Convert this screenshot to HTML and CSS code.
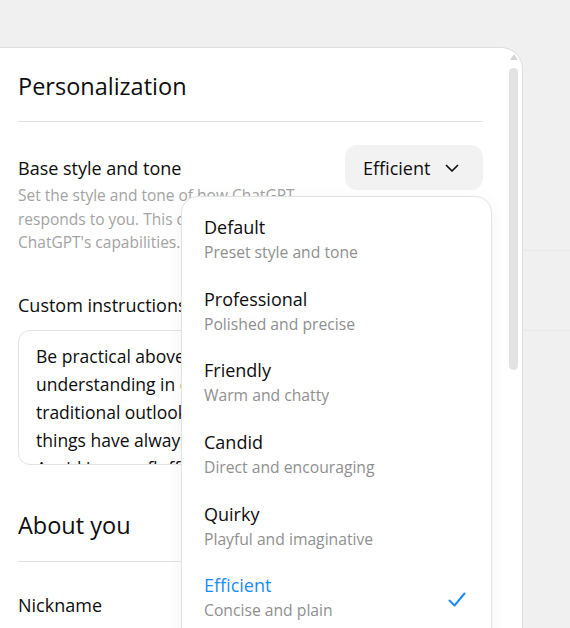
FILE: index.html
```html
<!DOCTYPE html>
<html lang="en">
<head>
<meta charset="utf-8">
<title>Personalization</title>
<link rel="stylesheet" href="styles.css">
</head>
<body>
<div class="page">
  <div class="panel">
    <div class="content">
      <h1 class="title">Personalization</h1>
      <div class="divider"></div>
      <div class="row">
        <div class="label">Base style and tone</div>
        <button class="select">Efficient
          <svg class="chev" width="16" height="16" viewBox="0 0 16 16"><path d="M2.5 5.5 L8 11 L13.5 5.5" fill="none" stroke="#0d0d0d" stroke-width="1.7" stroke-linecap="round" stroke-linejoin="round"/></svg>
        </button>
      </div>
      <p class="desc">Set the style and tone of how ChatGPT responds to you. This doesn't impact ChatGPT's capabilities.</p>
      <div class="label ci">Custom instructions</div>
      <div class="textarea">
        <div class="ta-text">Be practical above all else and keep things simple.<br>understanding in every answer matters more than flair.<br>traditional outlook is welcome; respect how<br>things have always been done and explain trade-offs.<br>Avoid jargon, fluff and needless disclaimers.</div>
      </div>
      <h2 class="title about">About you</h2>
      <div class="divider"></div>
      <div class="label nick">Nickname</div>

      <div class="menu">
        <div class="item"><div class="it">Default</div><div class="is">Preset style and tone</div></div>
        <div class="item"><div class="it">Professional</div><div class="is">Polished and precise</div></div>
        <div class="item"><div class="it">Friendly</div><div class="is">Warm and chatty</div></div>
        <div class="item"><div class="it">Candid</div><div class="is">Direct and encouraging</div></div>
        <div class="item"><div class="it">Quirky</div><div class="is">Playful and imaginative</div></div>
        <div class="item selected"><div class="txt"><div class="it">Efficient</div><div class="is">Concise and plain</div></div>
          <svg class="check" width="20" height="20" viewBox="0 0 20 20"><path d="M2.5 10.5 L7.5 15.5 L17.5 3.5" fill="none" stroke="#1a8cff" stroke-width="2" stroke-linecap="round" stroke-linejoin="round"/></svg>
        </div>
      </div>
    </div>
    <div class="scroll">
      <svg class="arrow" width="10" height="8" viewBox="0 0 10 8"><path d="M5 1 L9 7 L1 7 Z" fill="#d6d6d6"/></svg>
      <div class="track"></div>
    </div>
  </div>
  <div class="backdrop">
    <div class="bline first"></div>
    <div class="bline second"></div>
  </div>
</div>
</body>
</html>
```
FILE: styles.css
```css
* { box-sizing: border-box; }
html, body { margin: 0; padding: 0; }
body {
  background: #f0f0f0;
  font-family: "Open Sans", "Noto Sans", sans-serif;
  color: #0d0d0d;
  overflow: hidden;
  width: 570px;
  height: 628px;
}
.page {
  display: flex;
  height: 628px;
}
.panel {
  position: relative;
  margin-top: 47px;
  margin-left: -20px;
  width: 543px;
  flex: none;
  height: 640px;
  background: #fff;
  border: 1px solid #dedede;
  border-top-right-radius: 22px;
  display: flex;
}
.content {
  position: relative;
  width: 502px;
  padding-left: 37px;
  flex: none;
}
.title {
  margin: 0;
  font-size: 23.5px;
  font-weight: 400;
  line-height: 32px;
  padding-top: 22px;
}
.divider {
  height: 1px;
  background: #e3e3e3;
  margin-top: 19px;
}
.row {
  display: flex;
  justify-content: space-between;
  align-items: center;
  margin-top: 23px;
}
.label {
  font-size: 18px;
  line-height: 26px;
}
.select {
  display: flex;
  align-items: center;
  gap: 14px;
  height: 45px;
  width: 138px;
  padding: 0 0 0 18px;
  border: none;
  border-radius: 12px;
  background: #f2f2f2;
  font-family: inherit;
  font-size: 18px;
  color: #0d0d0d;
}
.desc {
  margin: -6px 0 0;
  width: 310px;
  font-size: 15.5px;
  line-height: 23.5px;
  color: #a3a3a3;
}
.ci { margin-top: 37px; }
.textarea {
  margin-top: 12px;
  height: 135px;
  border: 1px solid #e3e3e3;
  border-radius: 12px;
  overflow: hidden;
  padding: 11px 17px 0;
}
.ta-text {
  font-size: 17.5px;
  line-height: 28px;
  color: #0d0d0d;
  white-space: nowrap;
}
.about { padding-top: 44px; }
.about + .divider { margin-top: 20px; }
.nick { margin-top: 30px; }

.menu {
  position: absolute;
  left: 200px;
  top: 148px;
  width: 311px;
  height: 500px;
  background: #fff;
  border: 1px solid #e3e3e3;
  border-radius: 17px;
  box-shadow: 0 4px 16px rgba(0,0,0,0.06);
  padding-top: 7px;
}
.item {
  padding: 10.3px 22px;
  height: 71.6px;
}
.it {
  font-size: 18px;
  line-height: 26px;
  color: #0d0d0d;
}
.is {
  font-size: 15.7px;
  line-height: 25px;
  color: #8f8f8f;
}
.selected {
  display: flex;
  justify-content: space-between;
  align-items: center;
}
.selected .it { color: #1a8cff; }
.check { margin-right: 2px; margin-top: 4px; }

.scroll {
  flex: none;
  width: 39px;
  padding-left: 26px;
  display: flex;
  flex-direction: column;
  align-items: flex-start;
}
.arrow { margin-top: 5px; }
.track {
  margin-top: 7px;
  width: 9px;
  height: 302px;
  background: #e3e3e3;
  border-radius: 5px;
}
.backdrop {
  flex: 1;
  padding-top: 250px;
}
.bline {
  height: 1px;
  background: #e8e8e8;
}
.second { margin-top: 79px; }
```
